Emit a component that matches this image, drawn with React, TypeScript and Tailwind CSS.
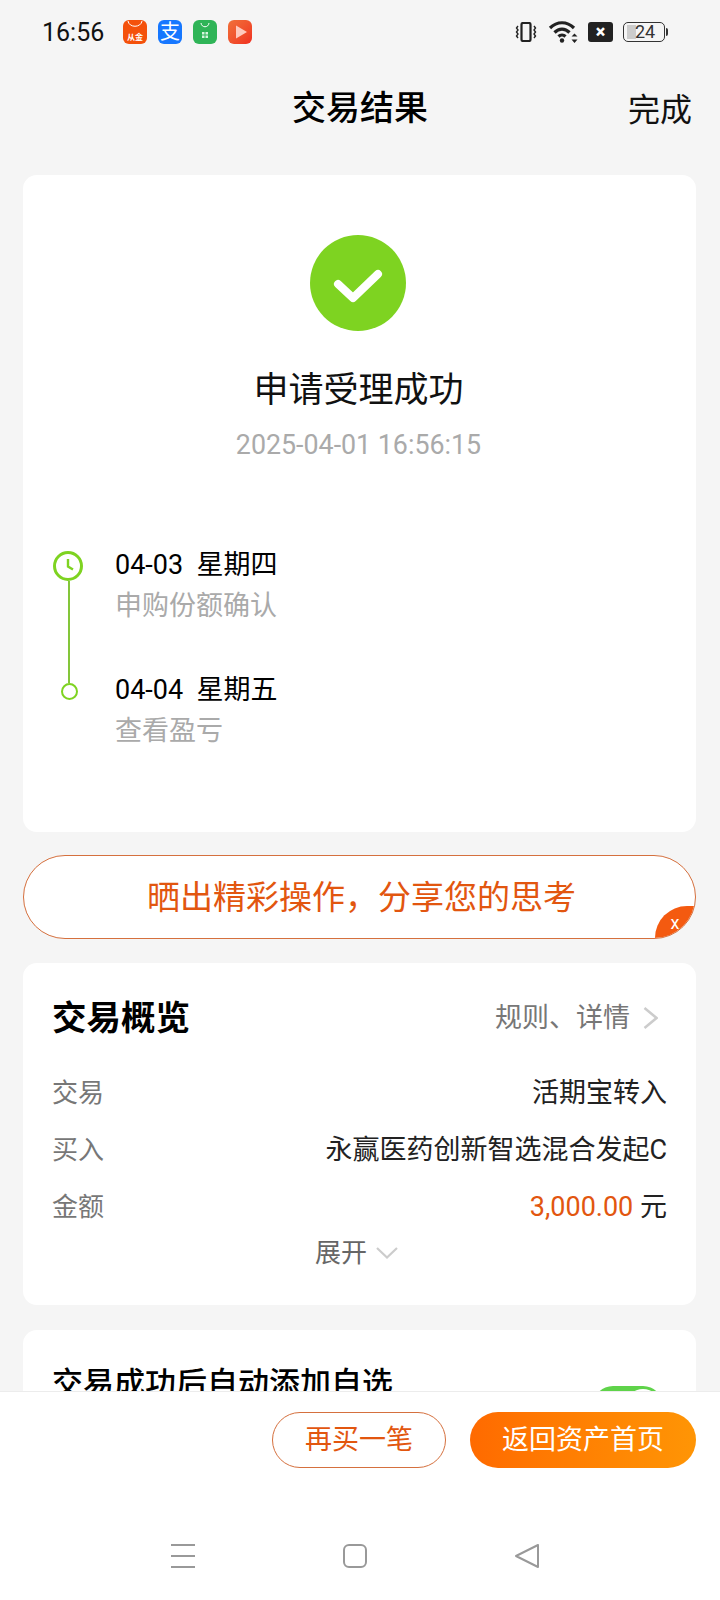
const cjk = "font-['Roboto','Noto_Sans_CJK_SC',sans-serif]";

function AppIcons() {
  return (
    <div className="flex gap-[11px]">
      <div className="relative flex h-6 w-6 items-end justify-center overflow-hidden rounded-[6px] bg-[#f4510b] pb-[1px] text-[8px] leading-[10px] font-bold text-white">
        <svg viewBox="0 0 24 24" className="absolute top-0 left-0 h-6 w-6" fill="none" stroke="#fff" strokeWidth="1">
          <path d="M5 1c1 7 13 7 14 0" />
        </svg>
        从金
      </div>
      <div className="flex h-6 w-6 items-center justify-center rounded-[6px] bg-[#1677ff] text-[20px] leading-none text-white">
        支
      </div>
      <div className="flex h-6 w-6 items-center justify-center rounded-[6px] bg-[#2fb457]">
        <svg viewBox="0 0 24 24" className="h-6 w-6" fill="none">
          <path d="M8 3c.5 5 7.500 5 8 0" stroke="#fff" strokeWidth="1" />
          <path d="M9 12h2.500v2.500H9zM12.500 12H15v2.500h-2.500zM9 15.500h2.500V18H9zM12.500 15.500H15V18h-2.500z" fill="#d6f5de" />
        </svg>
      </div>
      <div className="flex h-6 w-6 items-center justify-center rounded-[6px] bg-gradient-to-br from-[#f0703a] to-[#f02c20]">
        <svg viewBox="0 0 24 24" className="h-6 w-6">
          <path d="M8 5.500 19 12 8 18.500z" fill="#ffc9bd" />
        </svg>
      </div>
    </div>
  );
}

function StatusIcons() {
  return (
    <div className="flex items-center">
      <svg viewBox="0 0 22 20" className="h-5 w-[22px]" fill="none" stroke="#222">
        <rect x="6.500" y="1" width="9" height="18" rx="1.500" strokeWidth="2.200" />
        <path d="M3 4l-1.500 2L3 8l-1.500 2L3 12l-1.500 2L3 16M19 4l1.500 2L19 8l1.500 2L19 12l1.500 2L19 16" strokeWidth="1.400" />
      </svg>
      <svg viewBox="0 0 32 26" className="ml-[11px] h-[26px] w-8" fill="none" stroke="#222" strokeWidth="3.200">
        <path d="M2 9c7-7 17-7 24 0" />
        <path d="M6.500 13.500c4.500-4.500 10.500-4.500 15 0" />
        <path d="M10.500 17.500c2-2 5-2 7 0" />
        <circle cx="14" cy="21.500" r="2.200" fill="#222" stroke="none" />
        <path d="M26.500 14.500l3 3h-6zM26.500 24l3-3.500h-6z" fill="#222" stroke="none" />
      </svg>
      <div className="ml-2 flex h-5 w-[25px] items-center justify-center rounded-[3px] bg-[#222]">
        <span className="text-[18px] leading-none font-black text-white">×</span>
      </div>
      <div className="ml-[10px] flex items-center">
        <div className="relative flex h-5 w-[42px] items-center justify-center overflow-hidden rounded-[5px] border border-[#333]">
          <div className="absolute top-[2px] bottom-[2px] left-[3px] w-[9px] bg-[#cccccc]" />
          <span className="relative ml-[2px] font-['Roboto',sans-serif] text-[18px] leading-none text-[#333]">24</span>
        </div>
        <div className="ml-[1px] h-2 w-[2px] rounded-r-sm bg-[#333]" />
      </div>
    </div>
  );
}

function Timeline() {
  return (
    <div className="mt-[90px] flex flex-col pl-[30px]">
      <div className="relative flex h-[132px]">
        <div className="w-[62px]">
          <svg viewBox="0 0 30 30" className="h-[30px] w-[30px]" fill="none" stroke="#7ed321">
            <circle cx="15" cy="15" r="13.500" strokeWidth="3" />
            <path d="M15 8v7.500l5 3" strokeWidth="2.400" />
          </svg>
        </div>
        <div className="absolute top-[30px] bottom-0 left-[15px] w-[1.500px] bg-[#84c63a]" />
        <div className="-mt-[1px] text-[27px] leading-[30px] text-black">
          <div className="whitespace-pre">04-03  星期四</div>
          <div className="mt-[11px] leading-[30px] text-[#aaaaaa]">申购份额确认</div>
        </div>
      </div>
      <div className="relative flex h-[70px]">
        <div className="relative w-[62px]">
          <div className="absolute top-0 left-[8px] h-[17px] w-[17px] rounded-full border-2 border-[#7ed321] bg-white" />
        </div>
        <div className="-mt-[8px] text-[27px] leading-[30px] text-black">
          <div className="whitespace-pre">04-04  星期五</div>
          <div className="mt-[11px] leading-[30px] text-[#aaaaaa]">查看盈亏</div>
        </div>
      </div>
    </div>
  );
}

function DetailRow({ label, children }: { label: string; children: React.ReactNode }) {
  return (
    <div className="flex h-[57px] items-center justify-between text-[26px] leading-[30px]">
      <span className="text-[#777777]">{label}</span>
      <span className="text-[27px] text-[#222222]">{children}</span>
    </div>
  );
}

export default function App() {
  return (
    <div className={`${cjk} flex h-[1600px] w-[720px] flex-col overflow-hidden bg-[#f5f5f5]`}>
      <div className="h-[1391px] overflow-hidden">
        {/* status bar */}
        <div className="flex h-[64px] items-center justify-between pr-[52px] pl-[42px]">
          <div className="flex items-center">
            <span className="w-[81px] text-[25px] leading-none text-[#111]">16:56</span>
            <AppIcons />
          </div>
          <StatusIcons />
        </div>

        {/* header */}
        <div className="relative flex h-[88px] items-center justify-center">
          <span className="text-[34px] leading-none font-medium text-black">交易结果</span>
          <span className="absolute top-[30px] right-[28px] text-[32px] leading-none text-[#111]">完成</span>
        </div>

        {/* result card */}
        <div className="mr-[24px] ml-[23px] mt-[23px] h-[657px] rounded-[14px] bg-white pt-[60px]">
          <div className="flex flex-col items-center">
            <svg viewBox="0 0 96 96" className="mr-[3px] h-24 w-24">
              <circle cx="48" cy="48" r="48" fill="#7ed321" />
              <path d="M28 49l15 14 25-24" fill="none" stroke="#fff" strokeWidth="8" strokeLinecap="round" strokeLinejoin="round" />
            </svg>
            <div className="mt-[38px] mr-[2px] text-[35px] leading-[44px] text-[#111]">申请受理成功</div>
            <div className="mt-[16px] mr-[2px] text-[26.800px] leading-[32px] text-[#aaaaaa]">2025-04-01 16:56:15</div>
          </div>
          <Timeline />
        </div>

        {/* share banner */}
        <div className="relative mr-[24px] ml-[23px] mt-[23px] flex h-[84px] items-center justify-center overflow-hidden rounded-[42px] border border-[#d5703e] bg-white pl-[4px]">
          <span className="text-[33px] leading-none text-[#e2560f]">晒出精彩操作，分享您的思考</span>
          <div className="absolute right-0 bottom-0 flex h-8 w-10 items-center justify-center rounded-tl-[32px] bg-[#f45a10] pt-[2px] text-[18px] leading-none text-white">
            x
          </div>
        </div>

        {/* overview card */}
        <div className="mr-[24px] ml-[23px] mt-[24px] h-[342px] rounded-[14px] bg-white px-[29px] pt-[31px]">
          <div className="flex h-[48px] items-center justify-between">
            <span className="text-[34.500px] leading-none font-bold text-black">交易概览</span>
            <span className="flex items-center pr-[9px] text-[27px] leading-none text-[#777777]">
              规则、详情
              <svg viewBox="0 0 15 22" className="ml-[13px] h-[22px] w-[15px]" fill="none" stroke="#cccccc" strokeWidth="2.500">
                <path d="M1.500 1l12 10-12 10" />
              </svg>
            </span>
          </div>
          <div className="mt-[22px]">
            <DetailRow label="交易">活期宝转入</DetailRow>
            <DetailRow label="买入">永赢医药创新智选混合发起C</DetailRow>
            <DetailRow label="金额">
              <span className="text-[#e2560f]">3,000.00</span> 元
            </DetailRow>
          </div>
          <div className="mt-[3px] flex items-center justify-center pr-[6px] text-[26px] leading-[30px] text-[#666666]">
            展开
            <svg viewBox="0 0 22 12" className="ml-[9px] h-3 w-[22px]" fill="none" stroke="#cccccc" strokeWidth="2.200">
              <path d="M1 1l10 9.500L21 1" />
            </svg>
          </div>
        </div>

        {/* auto-watchlist card, cut off by the bottom bar */}
        <div className="mr-[24px] ml-[23px] mt-[25px] h-[200px] rounded-[14px] bg-white pr-[33px] pl-[29px] pt-[36px]">
          <div className="flex items-start justify-between">
            <span className="text-[31px] leading-[36px] font-medium text-black">交易成功后自动添加自选</span>
            <div className="mt-[20px] flex h-[40px] w-[70px] justify-end rounded-full bg-[#5fd34a] p-[3px]">
              <div className="h-[34px] w-[34px] rounded-full bg-white" />
            </div>
          </div>
        </div>
      </div>

      {/* bottom actions */}
      <div className="h-[209px] border-t border-[#ececec] bg-white">
        <div className="flex justify-end gap-[24px] pt-[20px] pr-[24px]">
          <button className="flex h-[56px] w-[174px] items-center justify-center rounded-[28px] border border-[#d5703e] text-[27px] leading-none text-[#e2560f]">
            再买一笔
          </button>
          <button className="flex h-[56px] w-[226px] items-center justify-center rounded-[28px] bg-gradient-to-r from-[#ff6a00] to-[#ff9505] text-[27px] leading-none text-white">
            返回资产首页
          </button>
        </div>
        <div className="mt-[76px] flex justify-center gap-[148px] pr-[10px]">
          <svg viewBox="0 0 24 24" className="h-6 w-6" stroke="#999" strokeWidth="2">
            <path d="M0 1h24M0 12h24M0 23h24" />
          </svg>
          <svg viewBox="0 0 24 24" className="h-6 w-6" fill="none" stroke="#999" strokeWidth="2">
            <rect x="1" y="1" width="22" height="22" rx="5" />
          </svg>
          <svg viewBox="0 0 24 24" className="h-6 w-6" fill="none" stroke="#999" strokeWidth="2" strokeLinejoin="round">
            <path d="M23 1v22L1 12z" />
          </svg>
        </div>
      </div>
    </div>
  );
}
